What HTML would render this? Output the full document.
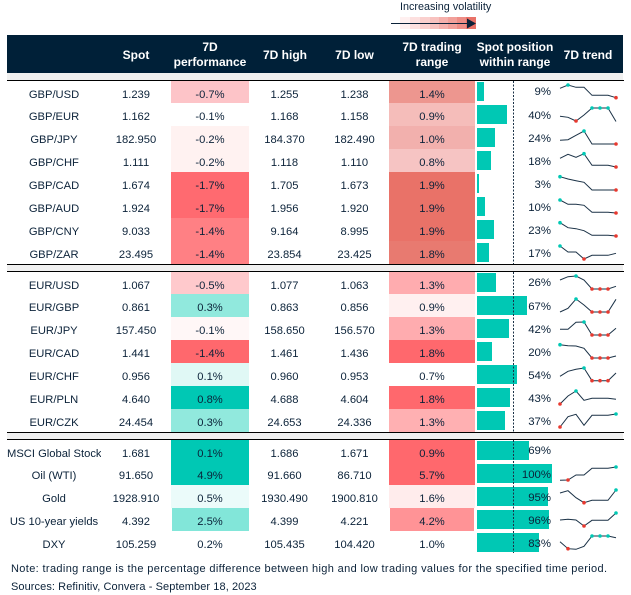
<!DOCTYPE html>
<html><head><meta charset="utf-8"><style>
html,body{margin:0;padding:0;background:#fff}
body{width:631px;height:595px;position:relative;overflow:hidden;font-family:"Liberation Sans",sans-serif;font-size:11.2px;color:#0b2239}
.a{position:absolute}
table{position:absolute;left:7px;width:616px;border-collapse:collapse;table-layout:fixed}
td{padding:6px 0 0 0;box-sizing:border-box;text-align:center;height:23px;line-height:13px;white-space:nowrap;position:relative}
tr:first-child td{height:22px}
.b{position:absolute;left:2px;top:2px;height:19px;background:#00c8b4}
tr:first-child .b{top:1px}
.p{position:absolute;right:4px;top:6px;line-height:14px;font-size:11.4px}
tr:first-child .p{top:4px}
.h{position:absolute;top:36px;height:38px;color:#fff;font-weight:bold;font-size:12px;line-height:15px;text-align:center;display:flex;align-items:center;justify-content:center}
.l{left:7px;width:617px;height:1px;background:#000}
.g{left:7px;width:616px;background:#f0f0f0}
polyline{fill:none;stroke:#1a3146;stroke-width:1}
.t{fill:#00c8b4}.r{fill:#e8392f}
</style></head><body>
<div class="a" style="left:400px;top:1px;font-size:10.8px;line-height:13px;white-space:nowrap">Increasing volatility</div>
<div class="a" style="left:400px;top:17px;width:76px;height:12px;background:linear-gradient(90deg,#fff0f0 0,#fff0f0 10px,#fde0df 10px,#fde0df 20px,#fad0ce 20px,#fad0ce 30px,#f8c2bf 30px,#f8c2bf 39px,#f5b0ac 39px,#f5b0ac 48px,#f2a09a 48px,#f2a09a 57px,#ee8d86 57px,#ee8d86 66px,#e97268 66px)"></div>
<div class="a" style="left:7px;top:35px;width:616px;height:38px;background:#002038"></div>
<div class="h" style="left:101px;width:70px">Spot</div>
<div class="h" style="left:171px;width:78px">7D<br>performance</div>
<div class="h" style="left:249px;width:72px">7D high</div>
<div class="h" style="left:320px;width:69px">7D low</div>
<div class="h" style="left:389px;width:86px">7D trading<br>range</div>
<div class="h" style="left:470px;width:90px">Spot position<br>within range</div>
<div class="h" style="left:555px;width:66px">7D trend</div>
<div class="a g" style="top:73px;height:7px"></div>
<div class="a l" style="top:80px"></div>
<div class="a g" style="top:265px;height:6px"></div>
<div class="a l" style="top:264px"></div>
<div class="a l" style="top:271px"></div>
<div class="a g" style="top:433px;height:6px"></div>
<div class="a l" style="top:432px"></div>
<div class="a l" style="top:439px"></div>

<table style="top:81px"><colgroup><col style="width:94px"><col style="width:70px"><col style="width:78px"><col style="width:71px"><col style="width:69px"><col style="width:86px"><col style="width:80px"><col style="width:68px"></colgroup>
<tr><td>GBP/USD</td><td>1.239</td><td style="background:#fdc4c8">-0.7%</td><td>1.255</td><td>1.238</td><td style="background:#ed968f">1.4%</td><td><div class="b" style="width:7px"></div><span class="p">9%</span></td><td></td></tr>
<tr><td>GBP/EUR</td><td>1.162</td><td>-0.1%</td><td>1.168</td><td>1.158</td><td style="background:#f5bdba">0.9%</td><td><div class="b" style="width:30px"></div><span class="p">40%</span></td><td></td></tr>
<tr><td>GBP/JPY</td><td>182.950</td><td style="background:#fff2f1">-0.2%</td><td>184.370</td><td>182.490</td><td style="background:#f2b0ad">1.0%</td><td><div class="b" style="width:18px"></div><span class="p">24%</span></td><td></td></tr>
<tr><td>GBP/CHF</td><td>1.111</td><td style="background:#fff2f1">-0.2%</td><td>1.118</td><td>1.110</td><td style="background:#f6c4c3">0.8%</td><td><div class="b" style="width:14px"></div><span class="p">18%</span></td><td></td></tr>
<tr><td>GBP/CAD</td><td>1.674</td><td style="background:#ff6a70">-1.7%</td><td>1.705</td><td>1.673</td><td style="background:#e97268">1.9%</td><td><div class="b" style="width:2px"></div><span class="p">3%</span></td><td></td></tr>
<tr><td>GBP/AUD</td><td>1.924</td><td style="background:#ff6a70">-1.7%</td><td>1.956</td><td>1.920</td><td style="background:#e97268">1.9%</td><td><div class="b" style="width:8px"></div><span class="p">10%</span></td><td></td></tr>
<tr><td>GBP/CNY</td><td>9.033</td><td style="background:#ff8084">-1.4%</td><td>9.164</td><td>8.995</td><td style="background:#e97268">1.9%</td><td><div class="b" style="width:17px"></div><span class="p">23%</span></td><td></td></tr>
<tr><td>GBP/ZAR</td><td>23.495</td><td style="background:#ff8084">-1.4%</td><td>23.854</td><td>23.425</td><td style="background:#e87a70">1.8%</td><td><div class="b" style="width:12px"></div><span class="p">17%</span></td><td></td></tr>
</table>

<table style="top:272px"><colgroup><col style="width:94px"><col style="width:70px"><col style="width:78px"><col style="width:71px"><col style="width:69px"><col style="width:86px"><col style="width:80px"><col style="width:68px"></colgroup>
<tr><td>EUR/USD</td><td>1.067</td><td style="background:#ffc9cc">-0.5%</td><td>1.077</td><td>1.063</td><td style="background:#ffacaf">1.3%</td><td><div class="b" style="width:19px"></div><span class="p">26%</span></td><td></td></tr>
<tr><td>EUR/GBP</td><td>0.861</td><td style="background:#91e9dd">0.3%</td><td>0.863</td><td>0.856</td><td style="background:#fff0f0">0.9%</td><td><div class="b" style="width:50px"></div><span class="p">67%</span></td><td></td></tr>
<tr><td>EUR/JPY</td><td>157.450</td><td style="background:#fff7f7">-0.1%</td><td>158.650</td><td>156.570</td><td style="background:#ffacaf">1.3%</td><td><div class="b" style="width:32px"></div><span class="p">42%</span></td><td></td></tr>
<tr><td>EUR/CAD</td><td>1.441</td><td style="background:#ff686d">-1.4%</td><td>1.461</td><td>1.436</td><td style="background:#ff686d">1.8%</td><td><div class="b" style="width:15px"></div><span class="p">20%</span></td><td></td></tr>
<tr><td>EUR/CHF</td><td>0.956</td><td style="background:#e0f8f5">0.1%</td><td>0.960</td><td>0.953</td><td>0.7%</td><td><div class="b" style="width:40px"></div><span class="p">54%</span></td><td></td></tr>
<tr><td>EUR/PLN</td><td>4.640</td><td style="background:#00c8b4">0.8%</td><td>4.688</td><td>4.604</td><td style="background:#ff686d">1.8%</td><td><div class="b" style="width:33px"></div><span class="p">43%</span></td><td></td></tr>
<tr><td>EUR/CZK</td><td>24.454</td><td style="background:#91e9dd">0.3%</td><td>24.653</td><td>24.336</td><td style="background:#ffb0b2">1.3%</td><td><div class="b" style="width:28px"></div><span class="p">37%</span></td><td></td></tr>
</table>

<table style="top:440px"><colgroup><col style="width:94px"><col style="width:70px"><col style="width:78px"><col style="width:71px"><col style="width:69px"><col style="width:86px"><col style="width:80px"><col style="width:68px"></colgroup>
<tr><td><div style="width:94px;overflow:hidden;text-align:left">MSCI Global Stocks</div></td><td>1.681</td><td style="background:#00c8b4">0.1%</td><td>1.686</td><td>1.671</td><td style="background:#ff686d">0.9%</td><td><div class="b" style="width:52px"></div><span class="p">69%</span></td><td></td></tr>
<tr><td>Oil (WTI)</td><td>91.650</td><td style="background:#00c8b4">4.9%</td><td>91.660</td><td>86.710</td><td style="background:#ff686d">5.7%</td><td><div class="b" style="width:75px"></div><span class="p">100%</span></td><td></td></tr>
<tr><td>Gold</td><td>1928.910</td><td style="background:#ebfbfa">0.5%</td><td>1930.490</td><td>1900.810</td><td style="background:#ffecec">1.6%</td><td><div class="b" style="width:71px"></div><span class="p">95%</span></td><td></td></tr>
<tr><td>US 10-year yields</td><td>4.392</td><td style="background:linear-gradient(90deg,#fff 1px,#82e6d9 1px)">2.5%</td><td>4.399</td><td>4.221</td><td style="background:linear-gradient(90deg,#fff 1px,#ff9396 1px,#ff9396 85px,#fff 85px)">4.2%</td><td><div class="b" style="width:72px"></div><span class="p">96%</span></td><td></td></tr>
<tr><td>DXY</td><td>105.259</td><td>0.2%</td><td>105.435</td><td>104.420</td><td>1.0%</td><td><div class="b" style="width:62px"></div><span class="p">83%</span></td><td></td></tr>
</table>

<svg class="a" style="left:0;top:0" width="631" height="595" viewBox="0 0 631 595">
<g stroke="#1a3146" stroke-width="1" stroke-dasharray="2 1.5">
<line x1="513.5" y1="81" x2="513.5" y2="264"/><line x1="513.5" y1="272" x2="513.5" y2="432"/><line x1="513.5" y1="440" x2="513.5" y2="553"/></g>
<line x1="391" y1="23.5" x2="470" y2="23.5" stroke="#0b2239" stroke-width="1"/>
<polygon points="467,18.5 476,23.5 467,28.5" fill="#0b2239"/>
<polyline points="560,88.3 568,85 576,87.3 584,87.3 592,95.3 600,95.3 608,95.3 616,97.7"/><circle class="t" cx="568" cy="85" r="1.8"/><circle class="r" cx="616" cy="97.7" r="1.8"/>
<polyline points="560,116.3 568,117.3 576,121 584,115 592,108 600,108 608,108 616,121.5"/><circle class="r" cx="576" cy="121" r="1.8"/><circle class="t" cx="592" cy="108" r="1.8"/><circle class="t" cx="600" cy="108" r="1.8"/><circle class="t" cx="608" cy="108" r="1.8"/>
<polyline points="560,140.3 568,139.7 576,135.3 584,131 592,144 600,144 608,144 616,144"/><circle class="t" cx="584" cy="131" r="1.8"/><circle class="r" cx="616" cy="144" r="1.8"/>
<polyline points="560,158.3 568,154.3 576,157.3 584,153.7 592,165.3 600,165.3 608,165.3 616,167"/><circle class="t" cx="584" cy="153.7" r="1.8"/><circle class="r" cx="616" cy="167" r="1.8"/>
<polyline points="560,176.7 568,179 576,180.7 584,182.3 592,190 600,190 608,190 616,190"/><circle class="t" cx="560" cy="176.7" r="1.8"/><circle class="r" cx="616" cy="190" r="1.8"/>
<polyline points="560,200 568,204.3 576,204.3 584,205.3 592,212.3 600,212.3 608,212.3 616,213"/><circle class="t" cx="560" cy="200" r="1.8"/><circle class="r" cx="616" cy="213" r="1.8"/>
<polyline points="560,222.7 568,227.7 576,228.7 584,230.7 592,235.3 600,235.3 608,235.3 616,236"/><circle class="t" cx="560" cy="222.7" r="1.8"/><circle class="r" cx="616" cy="236" r="1.8"/>
<polyline points="560,246 568,252 576,252 584,259 592,255.3 600,255.3 608,255.3 616,253.3"/><circle class="t" cx="560" cy="246" r="1.8"/><circle class="r" cx="584" cy="259" r="1.8"/>
<polyline points="560,280 568,276.7 576,276 584,280 592,289 600,289 608,289 616,286.3"/><circle class="t" cx="576" cy="276" r="1.8"/><circle class="r" cx="592" cy="289" r="1.8"/><circle class="r" cx="600" cy="289" r="1.8"/><circle class="r" cx="608" cy="289" r="1.8"/>
<polyline points="560,312 568,308.3 576,299 584,305 592,312 600,312 608,312 616,299.3"/><circle class="t" cx="576" cy="299" r="1.8"/><circle class="r" cx="592" cy="312" r="1.8"/><circle class="r" cx="600" cy="312" r="1.8"/><circle class="r" cx="608" cy="312" r="1.8"/>
<polyline points="560,329.3 568,329.3 576,322.3 584,322 592,335 600,335 608,335 616,328.3"/><circle class="t" cx="584" cy="322" r="1.8"/><circle class="r" cx="592" cy="335" r="1.8"/><circle class="r" cx="600" cy="335" r="1.8"/><circle class="r" cx="608" cy="335" r="1.8"/>
<polyline points="560,344.7 568,345.7 576,346 584,348.3 592,358 600,358 608,358 616,356"/><circle class="t" cx="560" cy="344.7" r="1.8"/><circle class="r" cx="592" cy="358" r="1.8"/><circle class="r" cx="600" cy="358" r="1.8"/><circle class="r" cx="608" cy="358" r="1.8"/>
<polyline points="560,376.3 568,371.3 576,369.3 584,368 592,380.7 600,380.7 608,380.7 616,373"/><circle class="t" cx="584" cy="368" r="1.8"/><circle class="r" cx="592" cy="380.7" r="1.8"/><circle class="r" cx="600" cy="380.7" r="1.8"/><circle class="r" cx="608" cy="380.7" r="1.8"/>
<polyline points="560,404 568,396 576,391 584,400.3 592,398.3 600,398.3 608,398.3 616,399.3"/><circle class="r" cx="560" cy="404" r="1.8"/><circle class="t" cx="576" cy="391" r="1.8"/>
<polyline points="560,427 568,416.7 576,414.3 584,425.3 592,415.3 600,415.3 608,415.3 616,414"/><circle class="r" cx="560" cy="427" r="1.8"/><circle class="t" cx="616" cy="414" r="1.8"/>
<polyline points="560,480.3 568,480 576,475 584,475 592,468.3 600,468.3 608,468.3 616,467"/><circle class="r" cx="568" cy="480" r="1.8"/><circle class="t" cx="616" cy="467" r="1.8"/>
<polyline points="560,493 568,490.7 576,497.7 584,502.7 592,500.3 600,500.3 608,500.3 616,490"/><circle class="r" cx="584" cy="502.7" r="1.8"/><circle class="t" cx="616" cy="490" r="1.8"/>
<polyline points="560,520 568,519.3 576,520 584,526 592,520.3 600,520.3 608,520.3 616,513"/><circle class="r" cx="584" cy="526" r="1.8"/><circle class="t" cx="616" cy="513" r="1.8"/>
<polyline points="560,541.7 568,548.7 576,549.3 584,546.3 592,536 600,536 608,536 616,537.7"/><circle class="r" cx="568" cy="548.7" r="1.8"/><circle class="t" cx="592" cy="536" r="1.8"/><circle class="t" cx="600" cy="536" r="1.8"/><circle class="t" cx="608" cy="536" r="1.8"/>
</svg>
<div class="a" style="left:11px;top:562px;font-size:11px;line-height:14px;white-space:nowrap;letter-spacing:.36px">Note: trading range is the percentage difference between high and low trading values for the specified time period.</div>
<div class="a" style="left:11px;top:580px;font-size:11px;line-height:14px;white-space:nowrap;letter-spacing:.08px">Sources: Refinitiv, Convera - September 18, 2023</div>
</body></html>
